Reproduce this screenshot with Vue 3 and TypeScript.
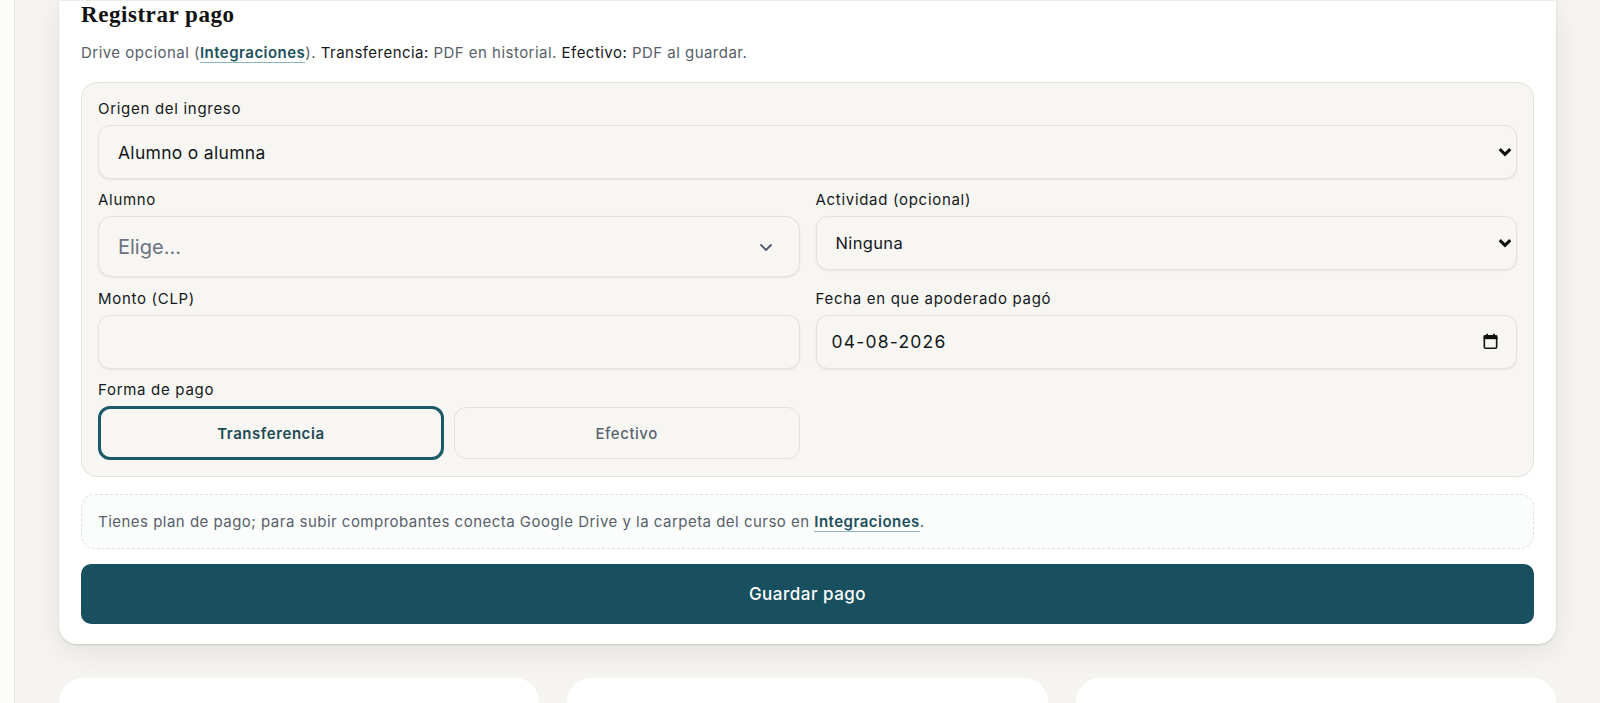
<script setup lang="ts">
const options: string[] = ['Alumno o alumna']
</script>

<template>
  <div class="page">
    <main class="main">
      <section class="card">
        <h2 class="title">Registrar pago</h2>
        <p class="lead">
          Drive opcional (<a class="link">Integraciones</a>). <span class="dark">Transferencia:</span> PDF en historial.
          <span class="dark">Efectivo:</span> PDF al guardar.
        </p>
        <div class="panel">
          <label class="field">
            <span class="label">Origen del ingreso</span>
            <span class="control-wrap">
              <select class="control select tall-text">
                <option v-for="o in options" :key="o">{{ o }}</option>
              </select>
              <svg class="caret" viewBox="0 0 12 12"><path d="M1.5 3.5 6 8l4.5-4.5" /></svg>
            </span>
          </label>
          <div class="grid">
            <div class="field">
              <span class="label">Alumno</span>
              <div class="combo">
                <span>Elige...</span>
                <svg class="chev" viewBox="0 0 16 16"><path d="M2.5 5.5 8 11l5.5-5.5" /></svg>
              </div>
            </div>
            <label class="field">
              <span class="label">Actividad (opcional)</span>
              <span class="control-wrap">
                <select class="control select small-text"><option>Ninguna</option></select>
                <svg class="caret" viewBox="0 0 12 12"><path d="M1.5 3.5 6 8l4.5-4.5" /></svg>
              </span>
            </label>
            <label class="field">
              <span class="label">Monto (CLP)</span>
              <input class="control" type="text" />
            </label>
            <label class="field">
              <span class="label">Fecha en que apoderado pagó</span>
              <span class="control-wrap">
                <input class="control date" type="text" value="04-08-2026" readonly />
                <svg class="cal" viewBox="0 0 16 16">
                  <path class="cal-fill" d="M1.5 2.2h13v3.6h-13z" />
                  <path class="cal-fill" d="M4 .8h1.6v2H4zM10.4.8H12v2h-1.6z" />
                  <rect class="cal-line" x="2.2" y="2.7" width="11.6" height="11.6" rx="1.2" />
                </svg>
              </span>
            </label>
            <div class="field">
              <span class="label">Forma de pago</span>
              <div class="pay">
                <button class="pay-btn active" type="button">Transferencia</button>
                <button class="pay-btn" type="button">Efectivo</button>
              </div>
            </div>
          </div>
        </div>
        <p class="note">
          Tienes plan de pago; para subir comprobantes conecta Google Drive y la carpeta del curso en
          <a class="link">Integraciones</a>.
        </p>
        <button class="save" type="button">Guardar pago</button>
      </section>
      <div class="lower">
        <div class="mini"></div>
        <div class="mini"></div>
        <div class="mini"></div>
      </div>
    </main>
  </div>
</template>

<style>
html, body { margin: 0; background: #fcfcfb; }
</style>

<style scoped>
.page {
  height: 703px;
  overflow: hidden;
  padding-left: 14px;
  box-sizing: border-box;
  font-family: Inter, "Liberation Sans", sans-serif;
  color: #14181b;
}
.main {
  height: 703px;
  box-sizing: border-box;
  border-left: 1px solid #e6e4df;
  background: #f5f4f0;
  padding: 0 44px;
  overflow: hidden;
}
.card {
  box-sizing: border-box;
  height: 644px;
  background: #fff;
  border-radius: 0 0 18px 18px;
  box-shadow: 0 1px 2px rgba(30, 30, 20, 0.16), 0 8px 28px rgba(30, 30, 20, 0.08);
  padding: 0 22px;
  border-top: 1px solid #eeeeec;
}
.title {
  margin: 0;
  padding-top: 2px;
  font: 700 23px/24px "Liberation Serif", serif;
  letter-spacing: 0.55px;
  color: #111;
}
.lead {
  margin: 16px 0 0;
  font-size: 15px;
  line-height: 20px;
  color: #57606a;
  letter-spacing: 0.47px;
}
.dark { color: #14181b; }
.link {
  color: #1d4f5c;
  font-weight: 600;
  border-bottom: 1px solid #8bb5bd;
}
.panel {
  margin-top: 19px;
  box-sizing: border-box;
  background: #f7f6f3;
  border: 1.5px solid #e4e2dd;
  border-radius: 16px;
  padding: 16px;
  display: flex;
  flex-direction: column;
  gap: 11px;
}
.grid {
  display: grid;
  grid-template-columns: 1fr 1fr;
  column-gap: 16px;
  row-gap: 11.5px;
  align-items: start;
}
.field {
  display: flex;
  flex-direction: column;
  gap: 6px;
  min-width: 0;
}
.label {
  font-size: 15px;
  line-height: 20px;
  font-weight: 400;
  letter-spacing: 0.7px;
  color: #14181b;
}
.control-wrap {
  position: relative;
  display: block;
}
.control {
  display: block;
  width: 100%;
  height: 54px;
  box-sizing: border-box;
  padding: 0 19px;
  background: #f7f6f3;
  border: 1.5px solid #e4e2dd;
  border-radius: 12px;
  box-shadow: 0 1px 2px rgba(30, 30, 20, 0.08);
  font: 400 16px Inter, "Liberation Sans", sans-serif;
  color: #14181b;
  outline: none;
}
.select { appearance: none; }
.tall-text { font-size: 17.5px; letter-spacing: 0.3px; }
.small-text { font-size: 16.5px; letter-spacing: 0.35px; }
.date {
  letter-spacing: 1.2px;
  padding-left: 15px;
  font-size: 17.5px;
}
.caret {
  position: absolute;
  right: 5px;
  top: 50%;
  width: 14px;
  height: 14px;
  margin-top: -7px;
  fill: none;
  stroke: #111;
  stroke-width: 2.6;
  pointer-events: none;
}
.combo {
  height: 61px;
  box-sizing: border-box;
  display: flex;
  align-items: center;
  justify-content: space-between;
  padding: 0 25px 0 19px;
  background: #f7f6f3;
  border: 1.5px solid #e4e2dd;
  border-radius: 14px;
  box-shadow: 0 1px 2px rgba(30, 30, 20, 0.08);
  font-size: 20px;
  color: #6b7280;
}
.chev {
  width: 16px;
  height: 16px;
  fill: none;
  stroke: #4b5563;
  stroke-width: 1.8;
}
.cal {
  position: absolute;
  right: 18px;
  top: 50%;
  width: 17px;
  height: 17px;
  margin-top: -9px;
  pointer-events: none;
}
.cal-fill { fill: #111; }
.cal-line { fill: none; stroke: #111; stroke-width: 1.5; }
.pay {
  display: grid;
  grid-template-columns: 1fr 1fr;
  gap: 10px;
}
.pay-btn {
  height: 52px;
  margin: 1px 0;
  box-sizing: border-box;
  background: #f7f6f3;
  border: 1.5px solid #e4e2dd;
  border-radius: 12px;
  font: 500 15px Inter, "Liberation Sans", sans-serif;
  letter-spacing: 0.55px;
  color: #5b6570;
}
.pay-btn.active {
  height: 54px;
  margin: 0;
  border: 3px solid #1d5a69;
  color: #1f4a54;
  font-weight: 600;
}
.note {
  margin: 17px 0 0;
  box-sizing: border-box;
  height: 55px;
  line-height: 53px;
  padding: 0 16px;
  font-size: 15px;
  color: #57606a;
  background: #fbfdfc;
  border: 1.5px dashed #dfe3df;
  border-radius: 14px;
  letter-spacing: 0.48px;
}
.save {
  display: block;
  width: 100%;
  margin-top: 15px;
  height: 60px;
  background: #18505f;
  color: #fff;
  border: none;
  border-radius: 10px;
  font: 500 17px Inter, "Liberation Sans", sans-serif;
  letter-spacing: 0.5px;
}
.lower {
  margin-top: 34px;
  display: grid;
  grid-template-columns: repeat(3, 1fr);
  gap: 28px;
}
.mini {
  position: relative;
  height: 80px;
  background: #fff;
  border-radius: 24px 24px 0 0;
}
</style>
